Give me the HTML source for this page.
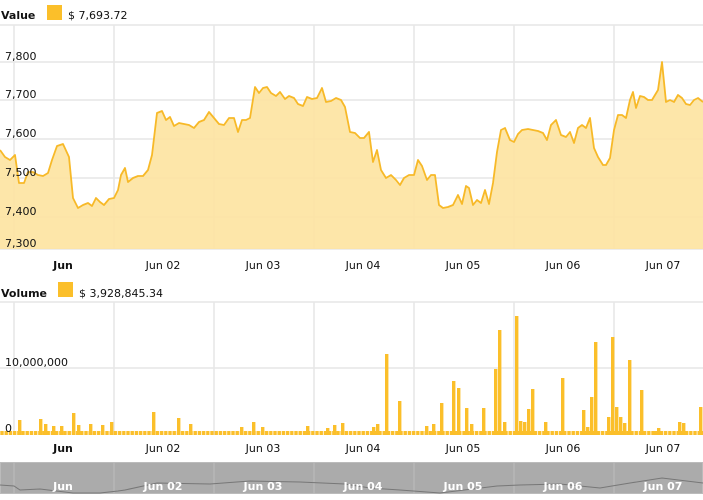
<!DOCTYPE html>
<html><head><meta charset="utf-8"><style>
html,body{margin:0;padding:0;background:#fff;width:703px;height:500px;overflow:hidden}
svg{display:block;font-family:"DejaVu Sans","Liberation Sans",sans-serif}
</style></head><body>
<svg width="703" height="500" viewBox="0 0 703 500" xmlns="http://www.w3.org/2000/svg">
<defs>
<pattern id="vb" x="0" y="0" width="4.2" height="10" patternUnits="userSpaceOnUse"><rect x="0.3" y="0" width="3.4" height="10" fill="#fbbf2a"/></pattern>
</defs>
<text x="1" y="19" font-size="11" font-weight="bold" fill="#111">Value</text>
<rect x="47" y="5" width="15" height="15" fill="#fbbf2a"/>
<text x="68" y="19" font-size="11" fill="#111">$ 7,693.72</text>
<g stroke="#e6e6e6" stroke-width="1.5">
<line x1="0" y1="25" x2="703" y2="25"/>
<line x1="0" y1="62" x2="703" y2="62"/>
<line x1="0" y1="100" x2="703" y2="100"/>
<line x1="0" y1="139" x2="703" y2="139"/>
<line x1="0" y1="178" x2="703" y2="178"/>
<line x1="0" y1="217" x2="703" y2="217"/>
<line x1="0" y1="249" x2="703" y2="249"/>
<line x1="14" y1="25" x2="14" y2="249"/><line x1="114" y1="25" x2="114" y2="249"/><line x1="214" y1="25" x2="214" y2="249"/><line x1="314" y1="25" x2="314" y2="249"/><line x1="414" y1="25" x2="414" y2="249"/><line x1="514" y1="25" x2="514" y2="249"/><line x1="614" y1="25" x2="614" y2="249"/>
</g>
<polygon fill="#fde3a0" fill-opacity="0.9" points="0,249 0,150 5,157 10,160 15,155 19,183 24,183 28,172 33,172 38,175 43,176 48,173 52,160 57,146 63,144 69,157 73,198 78,208 83,205 88,203 92,206 96,198 100,202 104,205 109,199 114,198 118,190 121,175 125,168 128,182 133,178 138,176 143,176 148,170 152,155 157,113 162,111 166,120 170,117 174,126 179,123 184,124 189,125 194,128 199,122 204,120 209,112 214,118 219,124 224,125 229,118 234,118 238,132 242,120 246,120 250,118 255,87 259,93 263,88 267,87 271,93 276,96 280,92 285,99 289,96 294,98 298,104 303,106 307,97 312,99 317,98 322,88 326,102 331,101 336,98 341,100 345,107 350,132 355,133 360,138 364,138 369,132 373,162 377,150 381,170 386,178 391,175 396,180 400,185 404,178 409,175 414,175 418,160 422,166 427,180 431,175 435,175 439,205 443,208 448,207 453,205 458,195 462,204 466,186 469,188 473,205 477,200 481,203 485,190 489,204 493,183 497,152 501,130 505,128 510,140 514,142 518,134 522,130 528,129 533,130 538,131 543,133 547,140 551,125 556,120 561,135 566,137 570,132 574,143 578,128 582,125 586,128 590,118 594,148 598,157 603,165 606,165 610,158 614,130 618,115 622,115 626,118 630,100 633,92 636,108 640,96 644,97 648,100 652,100 655,95 658,90 662,62 666,102 670,100 674,102 678,95 682,98 686,104 690,105 694,100 698,98 703,102 703,249"/>
<polyline fill="none" stroke="#f7b928" stroke-width="1.8" stroke-linejoin="round" points="0,150 5,157 10,160 15,155 19,183 24,183 28,172 33,172 38,175 43,176 48,173 52,160 57,146 63,144 69,157 73,198 78,208 83,205 88,203 92,206 96,198 100,202 104,205 109,199 114,198 118,190 121,175 125,168 128,182 133,178 138,176 143,176 148,170 152,155 157,113 162,111 166,120 170,117 174,126 179,123 184,124 189,125 194,128 199,122 204,120 209,112 214,118 219,124 224,125 229,118 234,118 238,132 242,120 246,120 250,118 255,87 259,93 263,88 267,87 271,93 276,96 280,92 285,99 289,96 294,98 298,104 303,106 307,97 312,99 317,98 322,88 326,102 331,101 336,98 341,100 345,107 350,132 355,133 360,138 364,138 369,132 373,162 377,150 381,170 386,178 391,175 396,180 400,185 404,178 409,175 414,175 418,160 422,166 427,180 431,175 435,175 439,205 443,208 448,207 453,205 458,195 462,204 466,186 469,188 473,205 477,200 481,203 485,190 489,204 493,183 497,152 501,130 505,128 510,140 514,142 518,134 522,130 528,129 533,130 538,131 543,133 547,140 551,125 556,120 561,135 566,137 570,132 574,143 578,128 582,125 586,128 590,118 594,148 598,157 603,165 606,165 610,158 614,130 618,115 622,115 626,118 630,100 633,92 636,108 640,96 644,97 648,100 652,100 655,95 658,90 662,62 666,102 670,100 674,102 678,95 682,98 686,104 690,105 694,100 698,98 703,102"/>
<g font-size="11" fill="#111">
<text x="5" y="60">7,800</text><text x="5" y="98">7,700</text><text x="5" y="137">7,600</text><text x="5" y="176">7,500</text><text x="5" y="215">7,400</text><text x="5" y="247">7,300</text>
</g>
<g font-size="11" fill="#111" text-anchor="middle">
<text x="63" y="269" font-weight="bold">Jun</text><text x="163" y="269">Jun 02</text><text x="263" y="269">Jun 03</text><text x="363" y="269">Jun 04</text><text x="463" y="269">Jun 05</text><text x="563" y="269">Jun 06</text><text x="663" y="269">Jun 07</text>
</g>
<text x="1" y="297" font-size="11" font-weight="bold" fill="#111">Volume</text>
<rect x="58" y="282" width="15" height="15" fill="#fbbf2a"/>
<text x="79" y="297" font-size="11" fill="#111">$ 3,928,845.34</text>
<g stroke="#e6e6e6" stroke-width="1.5">
<line x1="0" y1="302" x2="703" y2="302"/>
<line x1="0" y1="368" x2="703" y2="368"/>
<line x1="14" y1="302" x2="14" y2="435"/><line x1="114" y1="302" x2="114" y2="435"/><line x1="214" y1="302" x2="214" y2="435"/><line x1="314" y1="302" x2="314" y2="435"/><line x1="414" y1="302" x2="414" y2="435"/><line x1="514" y1="302" x2="514" y2="435"/><line x1="614" y1="302" x2="614" y2="435"/>
</g>
<rect x="0" y="431" width="703" height="4" fill="url(#vb)"/>
<g fill="#fbbf2a">
<rect x="18" y="420" width="3.4" height="15"/><rect x="39" y="419" width="3.4" height="16"/><rect x="44" y="424" width="3.4" height="11"/><rect x="52" y="426" width="3.4" height="9"/><rect x="60" y="426" width="3.4" height="9"/><rect x="72" y="413" width="3.4" height="22"/><rect x="77" y="425" width="3.4" height="10"/><rect x="89" y="424" width="3.4" height="11"/><rect x="101" y="425" width="3.4" height="10"/><rect x="110" y="422" width="3.4" height="13"/>
<rect x="152" y="412" width="3.4" height="23"/><rect x="177" y="418" width="3.4" height="17"/><rect x="189" y="424" width="3.4" height="11"/>
<rect x="240" y="427" width="3.4" height="8"/><rect x="252" y="422" width="3.4" height="13"/><rect x="261" y="427" width="3.4" height="8"/><rect x="306" y="426" width="3.4" height="9"/>
<rect x="326" y="428" width="3.4" height="7"/><rect x="333" y="425" width="3.4" height="10"/><rect x="341" y="423" width="3.4" height="12"/><rect x="372" y="427" width="3.4" height="8"/><rect x="376" y="424" width="3.4" height="11"/>
<rect x="385" y="354" width="3.4" height="81"/><rect x="398" y="401" width="3.4" height="34"/><rect x="425" y="426" width="3.4" height="9"/><rect x="432" y="424" width="3.4" height="11"/><rect x="440" y="403" width="3.4" height="32"/>
<rect x="452" y="381" width="3.4" height="54"/><rect x="457" y="388" width="3.4" height="47"/><rect x="465" y="408" width="3.4" height="27"/><rect x="470" y="424" width="3.4" height="11"/><rect x="482" y="408" width="3.4" height="27"/>
<rect x="494" y="369" width="3.4" height="66"/><rect x="498" y="330" width="3.4" height="105"/><rect x="503" y="422" width="3.4" height="13"/><rect x="515" y="316" width="3.4" height="119"/><rect x="519" y="421" width="3.4" height="14"/><rect x="523" y="422" width="3.4" height="13"/>
<rect x="527" y="409" width="3.4" height="26"/><rect x="531" y="389" width="3.4" height="46"/><rect x="544" y="422" width="3.4" height="13"/><rect x="561" y="378" width="3.4" height="57"/>
<rect x="582" y="410" width="3.4" height="25"/><rect x="586" y="427" width="3.4" height="8"/><rect x="590" y="397" width="3.4" height="38"/><rect x="594" y="342" width="3.4" height="93"/>
<rect x="607" y="417" width="3.4" height="18"/><rect x="611" y="337" width="3.4" height="98"/><rect x="615" y="407" width="3.4" height="28"/><rect x="619" y="417" width="3.4" height="18"/><rect x="623" y="423" width="3.4" height="12"/><rect x="628" y="360" width="3.4" height="75"/>
<rect x="640" y="390" width="3.4" height="45"/><rect x="657" y="428" width="3.4" height="7"/><rect x="653" y="431" width="3.4" height="4"/><rect x="678" y="422" width="3.4" height="13"/><rect x="682" y="423" width="3.4" height="12"/><rect x="699" y="407" width="3.4" height="28"/>
</g>
<text x="5" y="432" font-size="11" fill="#111">0</text>
<text x="5" y="366" font-size="11" fill="#111">10,000,000</text>
<g font-size="11" fill="#111" text-anchor="middle">
<text x="63" y="452" font-weight="bold">Jun</text><text x="163" y="452">Jun 02</text><text x="263" y="452">Jun 03</text><text x="363" y="452">Jun 04</text><text x="463" y="452">Jun 05</text><text x="563" y="452">Jun 06</text><text x="663" y="452">Jun 07</text>
</g>
<rect x="0" y="462" width="703" height="32" fill="#ababab"/>
<rect x="0.5" y="462.5" width="702" height="31" fill="none" stroke="#bbb"/>
<g stroke="#bcbcbc" stroke-width="1"><line x1="14" y1="462" x2="14" y2="494"/><line x1="114" y1="462" x2="114" y2="494"/><line x1="214" y1="462" x2="214" y2="494"/><line x1="314" y1="462" x2="314" y2="494"/><line x1="414" y1="462" x2="414" y2="494"/><line x1="514" y1="462" x2="514" y2="494"/><line x1="614" y1="462" x2="614" y2="494"/></g>
<polyline fill="none" stroke="#777" stroke-width="1" points="0,485 14,486 20,490 40,489 73,493 100,493 118,491 125,490 157,483 210,484 250,481 300,482 345,484 370,488 400,490 440,493 497,486 520,485 560,484 600,488 630,483 662,478 703,483"/>
<g font-size="11" fill="#fff" font-weight="bold" text-anchor="middle">
<text x="63" y="490">Jun</text><text x="163" y="490">Jun 02</text><text x="263" y="490">Jun 03</text><text x="363" y="490">Jun 04</text><text x="463" y="490">Jun 05</text><text x="563" y="490">Jun 06</text><text x="663" y="490">Jun 07</text>
</g>
</svg>
</body></html>
